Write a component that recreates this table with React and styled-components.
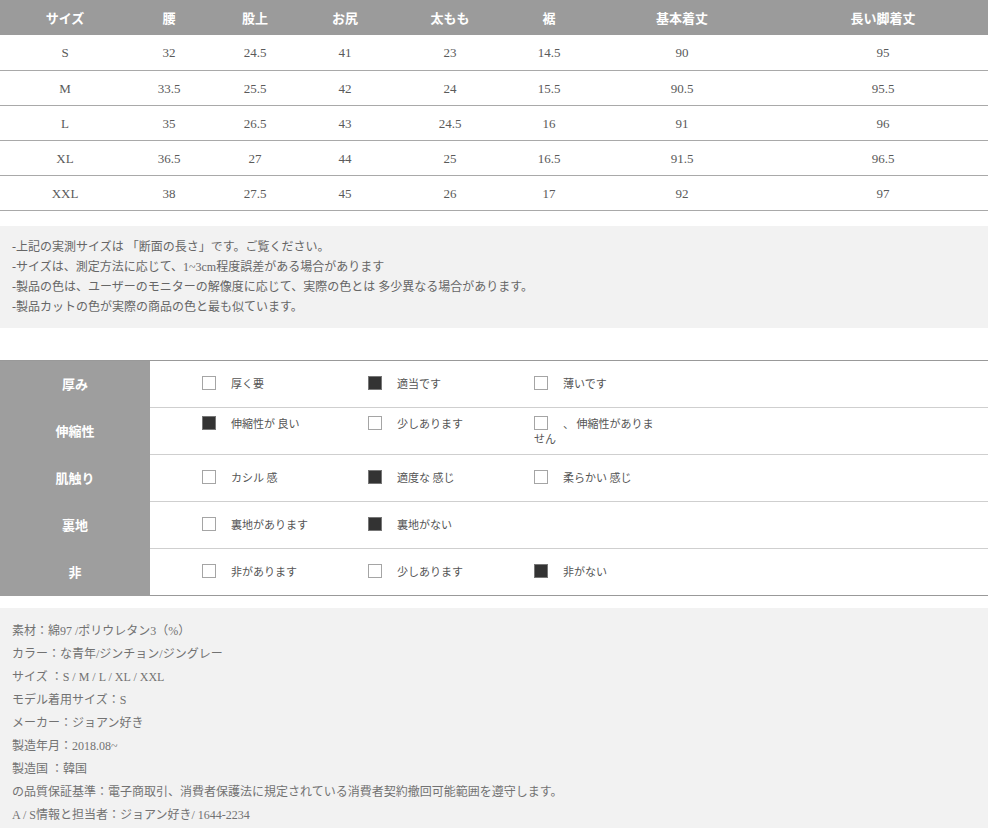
import React from "react";
import styled, { createGlobalStyle } from "styled-components";

const GlobalStyle = createGlobalStyle`
  body {
    margin: 0;
    background: #fff;
    font-family: "Liberation Serif", "Noto Sans CJK JP", serif;
  }
`;

const sizeCols = [130, 78, 94, 86, 124, 74, 192, 210];
const sizeHead = ["サイズ", "腰", "股上", "お尻", "太もも", "裾", "基本着丈", "長い脚着丈"];
const sizeRows = [
  ["S", "32", "24.5", "41", "23", "14.5", "90", "95"],
  ["M", "33.5", "25.5", "42", "24", "15.5", "90.5", "95.5"],
  ["L", "35", "26.5", "43", "24.5", "16", "91", "96"],
  ["XL", "36.5", "27", "44", "25", "16.5", "91.5", "96.5"],
  ["XXL", "38", "27.5", "45", "26", "17", "92", "97"],
];

const notes = [
  "-上記の実測サイズは 「断面の長さ」です。ご覧ください。",
  "-サイズは、測定方法に応じて、1~3cm程度誤差がある場合があります",
  "-製品の色は、ユーザーのモニターの解像度に応じて、実際の色とは 多少異なる場合があります。",
  "-製品カットの色が実際の商品の色と最も似ています。",
];

const features = [
  { label: "厚み", options: [["厚く要", false], ["適当です", true], ["薄いです", false]] },
  { label: "伸縮性", options: [["伸縮性が 良い", true], ["少しあります", false], ["、 伸縮性がありません", false]] },
  { label: "肌触り", options: [["カシル 感", false], ["適度な 感じ", true], ["柔らかい 感じ", false]] },
  { label: "裏地", options: [["裏地があります", false], ["裏地がない", true]] },
  { label: "非", options: [["非があります", false], ["少しあります", false], ["非がない", true]] },
];

const info = [
  "素材：綿97 /ポリウレタン3（%）",
  "カラー：な青年/ジンチョン/ジングレー",
  "サイズ ：S / M / L / XL / XXL",
  "モデル着用サイズ：S",
  "メーカー：ジョアン好き",
  "製造年月：2018.08~",
  "製造国 ：韓国",
  "の品質保証基準：電子商取引、消費者保護法に規定されている消費者契約撤回可能範囲を遵守します。",
  "A / S情報と担当者：ジョアン好き/ 1644-2234",
];

export default function App() {
  return (
    <Page>
      <GlobalStyle />
      <SizeTable>
        <colgroup>
          {sizeCols.map((w, i) => (
            <col key={i} style={{ width: w }} />
          ))}
        </colgroup>
        <thead>
          <tr>
            {sizeHead.map((h) => (
              <HeadCell key={h}>{h}</HeadCell>
            ))}
          </tr>
        </thead>
        <tbody>
          {sizeRows.map((row) => (
            <tr key={row[0]}>
              {row.map((v, i) => (
                <SizeCell key={i}>{v}</SizeCell>
              ))}
            </tr>
          ))}
        </tbody>
      </SizeTable>

      <NoteBox>
        {notes.map((n) => (
          <NoteLine key={n}>{n}</NoteLine>
        ))}
      </NoteBox>

      <FeatureTable>
        <tbody>
          {features.map((f) => (
            <tr key={f.label}>
              <LabelCell>{f.label}</LabelCell>
              <ValueCell>
                {f.options.map(([text, checked]) => (
                  <Option key={text}>
                    <Check $checked={checked} />
                    {text}
                  </Option>
                ))}
              </ValueCell>
            </tr>
          ))}
        </tbody>
      </FeatureTable>

      <InfoBox>
        {info.map((line) => (
          <InfoLine key={line}>{line}</InfoLine>
        ))}
      </InfoBox>
    </Page>
  );
}

const Page = styled.div`
  width: 988px;
`;

const SizeTable = styled.table`
  width: 100%;
  table-layout: fixed;
  border-collapse: collapse;
`;

const HeadCell = styled.th`
  height: 35px;
  padding: 0;
  background: #9b9b9b;
  color: #fff;
  font-size: 13px;
  font-weight: bold;
  text-align: center;
  vertical-align: middle;
`;

const SizeCell = styled.td`
  box-sizing: border-box;
  height: 35px;
  padding: 2px 0 0;
  border-bottom: 1px solid #a9a9a9;
  color: #5a5a5a;
  font-size: 13px;
  text-align: center;
  vertical-align: middle;
`;

const NoteBox = styled.div`
  margin-top: 15px;
  padding: 11px 12px 11px;
  background: #f2f2f2;
  color: #666;
  font-size: 12px;
  line-height: 20px;
`;

const NoteLine = styled.div``;

const FeatureTable = styled.table`
  margin-top: 32px;
  width: 100%;
  border-collapse: collapse;
  border-top: 1px solid #999;
`;

const LabelCell = styled.td`
  width: 150px;
  height: 46px;
  padding: 0;
  background: #9e9e9e;
  color: #fff;
  font-size: 13px;
  font-weight: bold;
  text-align: center;
  vertical-align: middle;

  tr:last-child > & {
    border-bottom: 1px solid #9e9e9e;
  }
`;

const ValueCell = styled.td`
  height: 46px;
  padding: 0 0 0 52px;
  border-bottom: 1px solid #cfcfcf;
  color: #555;
  font-family: "Noto Sans CJK JP", sans-serif;
  font-size: 11px;
  line-height: 15px;
  vertical-align: middle;

  tr:last-child > & {
    border-bottom-color: #999;
  }
`;

const Option = styled.span`
  display: inline-block;
  width: 124px;
  margin-right: 42px;
  vertical-align: top;
`;

const Check = styled.span`
  display: inline-block;
  box-sizing: border-box;
  width: 14px;
  height: 14px;
  margin-right: 15px;
  vertical-align: top;
  border: 1px solid ${(p) => (p.$checked ? "#777" : "#a5a5a5")};
  background: ${(p) => (p.$checked ? "#333" : "#fff")};
`;

const InfoBox = styled.div`
  margin-top: 12px;
  padding: 12px 12px 1px;
  background: #f2f2f2;
  color: #727272;
  font-size: 12px;
  line-height: 23px;
`;

const InfoLine = styled.div``;
